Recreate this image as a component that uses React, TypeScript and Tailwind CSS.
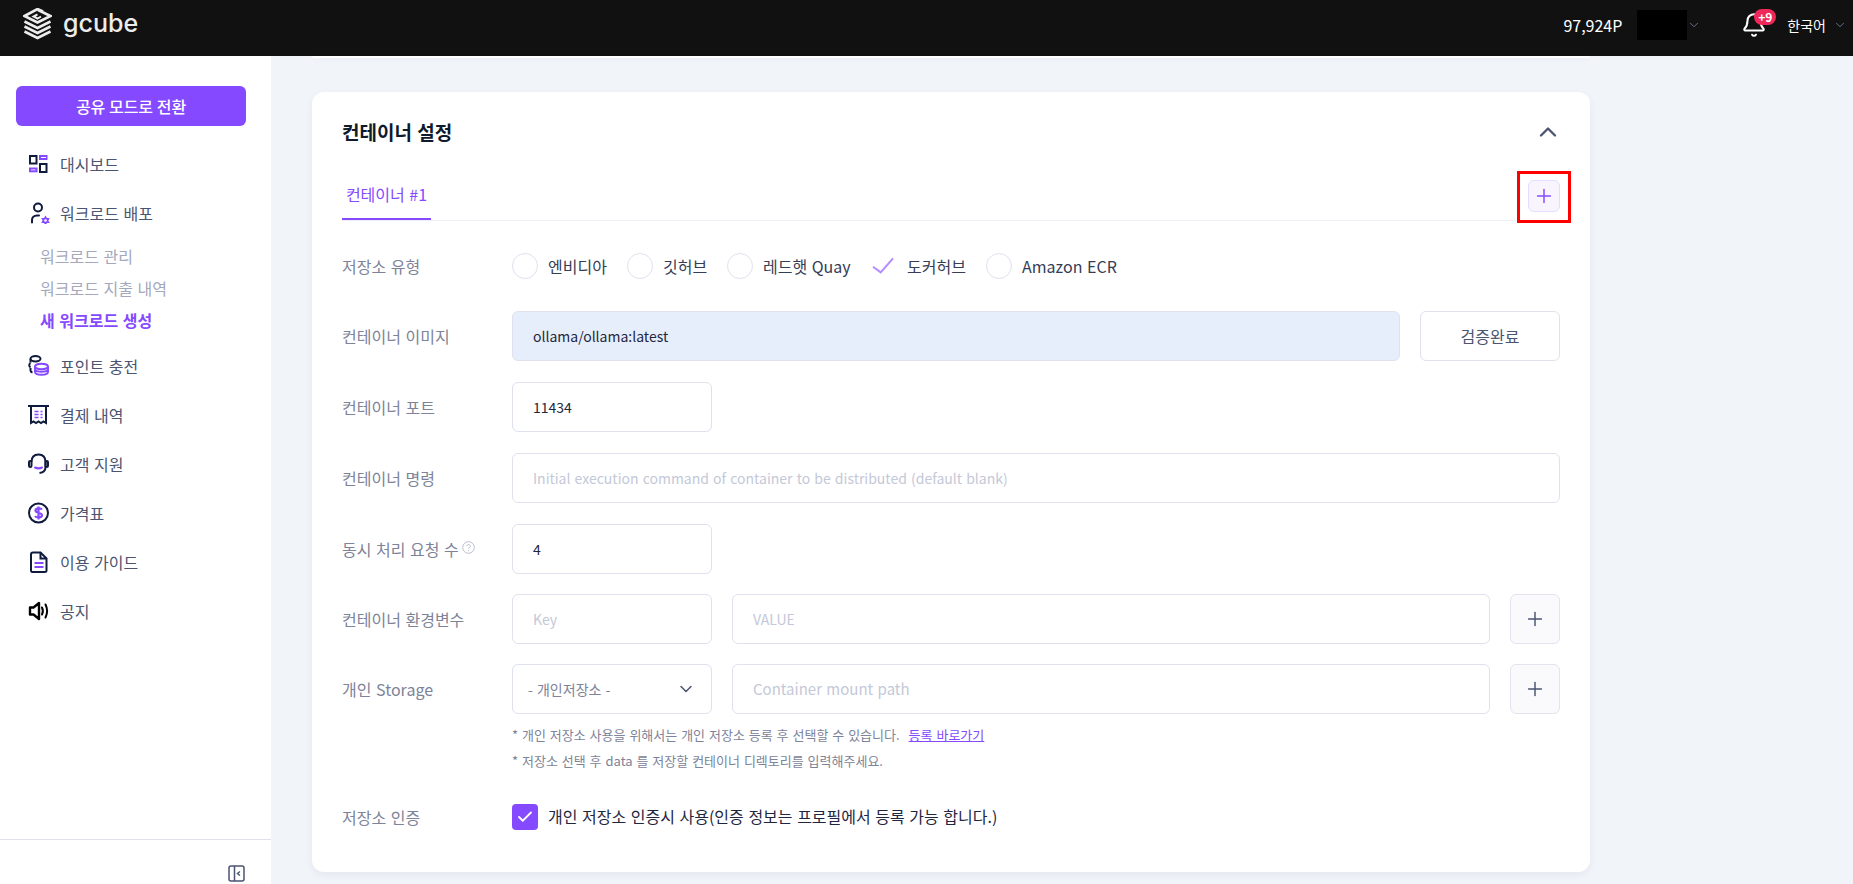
import React from "react";
import { ChevronDown, ChevronUp, Plus, Check, Bell } from "lucide-react";

const NAVY = "#0f1a3c";
const PUR = "#8549ff";

const Ic = ({ children }: { children: React.ReactNode }) => (
  <svg width="22" height="22" viewBox="0 0 22 22" fill="none" strokeWidth="2" className="shrink-0">
    {children}
  </svg>
);

const icons: Record<string, React.ReactNode> = {
  dash: (
    <Ic>
      <rect x="2" y="3" width="6.500" height="7.500" stroke={NAVY} />
      <rect x="2" y="15.500" width="6.500" height="2.800" stroke={PUR} />
      <rect x="12" y="3" width="6.500" height="3" stroke={PUR} />
      <rect x="12" y="11" width="6.500" height="8" stroke={NAVY} />
    </Ic>
  ),
  deploy: (
    <Ic>
      <circle cx="10" cy="5.500" r="4" stroke={NAVY} />
      <path d="M4 20.500V18c0-2.500 2-4.500 5-4.500h2" stroke={NAVY} strokeLinecap="round" />
      <polygon points="17.500,13.500 19,16 21.800,16 20.400,18.500 21.800,21 19,21 17.500,23.500 16,21 13.200,21 14.600,18.500 13.200,16 16,16" fill={PUR} />
      <circle cx="17.500" cy="18.500" r="1.300" fill="#fff" />
    </Ic>
  ),
  point: (
    <Ic>
      <ellipse cx="7.500" cy="3.800" rx="5" ry="2.700" stroke={NAVY} />
      <path d="M2.500 4v3.500M2.500 8C.800 9 .800 11.500 2.500 12.500M2.500 13v2.500c0 1 .8 1.700 2 2" stroke={NAVY} />
      <ellipse cx="13.500" cy="11.500" rx="6.500" ry="2.800" stroke={PUR} />
      <path d="M7 11.500v5.300c0 1.800 3 3 6.500 3s6.500-1.200 6.500-3v-5.300M7.500 15.500c1.500 1.500 10.500 1.500 12 0" stroke={PUR} />
    </Ic>
  ),
  bill: (
    <Ic>
      <path d="M0 2h21" stroke={NAVY} />
      <path d="M3 2v17l2.500-1.500 2.500 1.500 2.500-1.500 2.500 1.500 2.500-1.500 2.500 1.500V2" stroke={NAVY} />
      <path d="M6.500 7.500h4M12.500 7.500h2M6.500 10.500h4M12.500 10.500h2M6.500 13.500h4M12.500 13.500h2" stroke={PUR} strokeWidth="1.500" />
    </Ic>
  ),
  support: (
    <Ic>
      <path d="M3.500 9C3.500 4.500 6 1.500 10.500 1.500s7 3 7 7.500v5c0 3-2 5.500-6 6" stroke={NAVY} />
      <rect x="1" y="8" width="2.500" height="6" rx="1.200" stroke={NAVY} />
      <rect x="17.500" y="8" width="2.500" height="6" rx="1.200" stroke={NAVY} />
      <path d="M7 14.500c2 1 5 1 7 0" stroke={PUR} strokeLinecap="round" />
    </Ic>
  ),
  price: (
    <Ic>
      <circle cx="10.500" cy="11" r="9.500" stroke={NAVY} />
      <path d="M14 7.500c-1-1.500-6-2-6.500.8-.5 3 6.500 2 6.500 5 0 2.700-5.500 2.700-7 .8M10.500 4.500v13" stroke={PUR} strokeWidth="2.200" />
    </Ic>
  ),
  guide: (
    <Ic>
      <path d="M3 3.500c0-1 .7-2 2-2h7.500l6 6v12c0 1-.7 1.500-2 1.500H5c-1.300 0-2-.5-2-1.500z" stroke={NAVY} />
      <path d="M12.500 1.500v6h6" stroke={NAVY} />
      <path d="M6.500 12h9M6.500 16h9" stroke={PUR} />
    </Ic>
  ),
  notice: (
    <Ic>
      <path d="M2 7.500h3.500L11 3v16l-5.500-4.500H2z" stroke="#000" strokeLinejoin="round" strokeWidth="2.400" />
      <path d="M14 7.500c1 2 1 5 0 7M17.500 4.500c2 4 2 9 0 13" stroke="#000" strokeLinecap="round" />
    </Ic>
  ),
};

const Nav = ({ icon, label, gap }: { icon: string; label: string; gap: string }) => (
  <div className={`flex items-center h-[24px] pl-[28px] gap-[10px] text-[16px] text-[#4b5470] ${gap}`}>
    {icons[icon]}
    <span>{label}</span>
  </div>
);

const Label = ({ children }: { children: React.ReactNode }) => (
  <div className="w-[170px] shrink-0 text-[16px] text-[#7d8398] flex items-center">{children}</div>
);

const box = "h-[50px] border border-[#dfe2ee] rounded-[6px] bg-white flex items-center text-[14px]";

const Radio = ({ label, checked, w }: { label: string; checked?: boolean; w: string }) => (
  <div className={`flex items-center ${w}`}>
    {checked ? (
      <svg width="26" height="26" viewBox="0 0 26 26" fill="none" stroke="#b48cff" strokeWidth="2" className="shrink-0">
        <path d="M2 13.700l7.700 5.600L22 5.300" />
      </svg>
    ) : (
      <span className="w-[26px] h-[26px] rounded-full border border-[#dfe2ee] shrink-0" />
    )}
    <span className="ml-[10px] text-[16px] text-[#363d56] whitespace-nowrap">{label}</span>
  </div>
);

const PlusBtn = () => (
  <button className="w-[50px] h-[50px] ml-[20px] shrink-0 border border-[#e2e4ee] rounded-[6px] bg-[#fafafc] flex items-center justify-center">
    <Plus size={22} strokeWidth={1.6} className="text-[#4b5470]" />
  </button>
);

export default function App() {
  return (
    <div
      className="h-[884px] overflow-hidden flex flex-col bg-[#f1f4f9] [word-spacing:1px]"
      style={{ fontFamily: '"Noto Sans CJK KR", "Noto Sans", sans-serif' }}
    >
      <header className="h-[56px] shrink-0 bg-[#111111] flex items-center text-white">
        <div className="flex items-center pl-[23px] gap-[11px] -mt-[8px]">
          <svg width="29" height="32" viewBox="0 0 29 32" fill="none" stroke="#ececec" strokeWidth="2.600">
            <path d="M20 3.500L14.500 1 1.500 8 14.500 14.500 27.500 8 15 2" />
            <path d="M18 8.500L14.500 10.500 10.500 8.500 14.500 6.300" strokeWidth="2" />
            <path d="M1.500 13.500L14.500 20 27.500 13.500" />
            <path d="M1.500 18.500L14.500 25 27.500 18.500" />
            <path d="M1.500 23.500L14.500 30 27.500 23.500" />
          </svg>
          <span className="text-[25px] leading-none text-[#ececec] font-medium -mt-[1px]" style={{ fontFamily: "Inter, sans-serif" }}>
            gcube
          </span>
        </div>
        <div className="ml-auto flex items-center text-[16px] pb-[6px]">
          <span>97,924P</span>
          <span className="w-[50px] h-[30px] bg-black ml-[15px]" />
          <ChevronDown size={14} className="text-[#6e7a94]" strokeWidth={1.6} />
          <div className="relative ml-[40px] w-[26px] h-[26px]">
            <Bell size={26} strokeWidth={1.9} className="text-white" />
            <span className="absolute -top-[3px] left-[13px] w-[22px] h-[16px] rounded-full bg-[#f0285a] text-[12px] leading-[16px] text-center font-bold">+9</span>
          </div>
          <span className="text-[14px] ml-[20px]">한국어</span>
          <ChevronDown size={14} className="text-[#6e7a94] ml-[7px] mr-[6px]" strokeWidth={1.6} />
        </div>
      </header>
      <div className="flex flex-1 min-h-0">
        <aside className="w-[271px] shrink-0 bg-white flex flex-col">
          <div className="pt-[30px] px-[16px]">
            <button className="w-[230px] h-[40px] rounded-[6px] bg-[#8549ff] text-white text-[16px] font-medium">공유 모드로 전환</button>
          </div>
          <div className="mt-[26px] flex flex-col">
            <Nav icon="dash" label="대시보드" gap="" />
            <Nav icon="deploy" label="워크로드 배포" gap="mt-[25px]" />
            <div className="flex flex-col gap-[8px] pl-[40px] mt-[19px] text-[16px] text-[#a3a8bc]">
              <span className="h-[24px] leading-[24px]">워크로드 관리</span>
              <span className="h-[24px] leading-[24px]">워크로드 지출 내역</span>
              <span className="h-[24px] leading-[24px] font-bold text-[#8549ff]">새 워크로드 생성</span>
            </div>
            <Nav icon="point" label="포인트 충전" gap="mt-[22px]" />
            <Nav icon="bill" label="결제 내역" gap="mt-[25px]" />
            <Nav icon="support" label="고객 지원" gap="mt-[25px]" />
            <Nav icon="price" label="가격표" gap="mt-[25px]" />
            <Nav icon="guide" label="이용 가이드" gap="mt-[25px]" />
            <Nav icon="notice" label="공지" gap="mt-[25px]" />
          </div>
          <div className="mt-auto h-[45px] border-t border-[#dfe2ee] flex items-start justify-end pr-[25px] pt-[25px]">
            <svg width="18" height="18" viewBox="0 0 18 18" fill="none" stroke="#4b5470" strokeWidth="1.500">
              <rect x="1" y="1" width="15" height="15" rx="2" />
              <path d="M6.500 1v15M12 6.500L9.500 8.500 12 10.500" />
            </svg>
          </div>
        </aside>
        <main className="flex-1 min-w-0 pl-[41px] pr-[263px]">
          <div className="h-[2px] -mb-[2px] bg-white rounded-b-[12px] shadow-[0_2px_6px_rgba(40,50,90,0.05)]" />
          <section className="mt-[36px] h-[780px] bg-white rounded-[12px] shadow-[0_3px_8px_rgba(40,50,90,0.06)] px-[30px] flex flex-col">
            <div className="flex items-center justify-between h-[30px] mt-[25px]">
              <h2 className="text-[19px] font-bold text-[#0f1a2c]">컨테이너 설정</h2>
              <ChevronUp size={28} strokeWidth={2} className="text-[#4b5470] mr-[-2px]" />
            </div>
            <div className="relative mt-[26px] h-[48px] border-b border-[#eef0f5] flex">
              <div className="h-[47px] w-[89px] border-b-[2px] border-[#8549ff] text-[16px] text-[#8549ff] flex items-center justify-center pb-[3px]">컨테이너 #1</div>
              <button className="absolute right-0 top-[7px] w-[32px] h-[32px] rounded-[6px] border border-[#e6dcff] bg-[#f8f5ff] flex items-center justify-center">
                <Plus size={22} strokeWidth={1.6} className="text-[#8549ff]" />
              </button>
              <span className="absolute -right-[11px] -top-[2px] w-[54px] h-[52px] border-[3px] border-[#ff0000] pointer-events-none" />
            </div>
            <div className="flex mt-[32px] h-[26px]">
              <Label>저장소 유형</Label>
              <div className="flex">
                <Radio label="엔비디아" w="w-[115px]" />
                <Radio label="깃허브" w="w-[100px]" />
                <Radio label="레드햇 Quay" w="w-[144px]" />
                <Radio label="도커허브" w="w-[115px]" checked />
                <Radio label="Amazon ECR" w="w-[150px]" />
              </div>
            </div>
            <div className="flex mt-[32px]">
              <Label>컨테이너 이미지</Label>
              <div className={`${box} !bg-[#e7eefb] flex-1 pl-[20px] text-[#1f2740]`}>ollama/ollama:latest</div>
              <button className="w-[140px] h-[50px] ml-[20px] border border-[#dfe2ee] rounded-[6px] text-[16px] text-[#4b5470]">검증완료</button>
            </div>
            <div className="flex mt-[21px]">
              <Label>컨테이너 포트</Label>
              <div className={`${box} w-[200px] pl-[20px] text-[#1f2740]`}>11434</div>
            </div>
            <div className="flex mt-[21px]">
              <Label>컨테이너 명령</Label>
              <div className={`${box} flex-1 pl-[20px] text-[#c4c8d8]`}>Initial execution command of container to be distributed (default blank)</div>
            </div>
            <div className="flex mt-[21px]">
              <Label>
                동시 처리 요청 수
                <svg width="13" height="13" viewBox="0 0 13 13" fill="none" className="ml-[3px] -mt-[3px]" stroke="#b9bdd0">
                  <circle cx="6.500" cy="6.500" r="5.800" />
                  <path d="M4.800 5.200c0-2.200 3.500-2.200 3.500 0 0 1.300-1.800 1.300-1.800 2.600M6.500 9v1" />
                </svg>
              </Label>
              <div className={`${box} w-[200px] pl-[20px] text-[#1f2740]`}>4</div>
            </div>
            <div className="flex mt-[20px]">
              <Label>컨테이너 환경변수</Label>
              <div className={`${box} w-[200px] pl-[20px] text-[#c4c8d8]`}>Key</div>
              <div className={`${box} flex-1 ml-[20px] pl-[20px] text-[#c4c8d8]`}>VALUE</div>
              <PlusBtn />
            </div>
            <div className="flex mt-[20px]">
              <Label>개인 Storage</Label>
              <div className={`${box} w-[200px] pl-[15px] pr-[15px] justify-between text-[#7d8398]`}>
                <span>- 개인저장소 -</span>
                <ChevronDown size={20} strokeWidth={1.8} className="text-[#4b5470]" />
              </div>
              <div className={`${box} flex-1 ml-[20px] pl-[20px] !text-[15px] text-[#c4c8d8]`}>Container mount path</div>
              <PlusBtn />
            </div>
            <div className="pl-[170px] mt-[11px] text-[13px] text-[#7d8398] flex flex-col gap-[7px]">
              <div className="h-[19px] leading-[19px]">
                * 개인 저장소 사용을 위해서는 개인 저장소 등록 후 선택할 수 있습니다.
                <span className="ml-[9px] text-[#8549ff] underline">등록 바로가기</span>
              </div>
              <div className="h-[19px] leading-[19px]">* 저장소 선택 후 data 를 저장할 컨테이너 디렉토리를 입력해주세요.</div>
            </div>
            <div className="flex mt-[34px] h-[26px]">
              <Label>저장소 인증</Label>
              <span className="w-[26px] h-[26px] rounded-[4px] bg-[#8549ff] flex items-center justify-center">
                <Check size={18} strokeWidth={2.4} className="text-white" />
              </span>
              <span className="ml-[10px] text-[16px] text-[#1f2740]">개인 저장소 인증시 사용(인증 정보는 프로필에서 등록 가능 합니다.)</span>
            </div>
          </section>
        </main>
      </div>
    </div>
  );
}
